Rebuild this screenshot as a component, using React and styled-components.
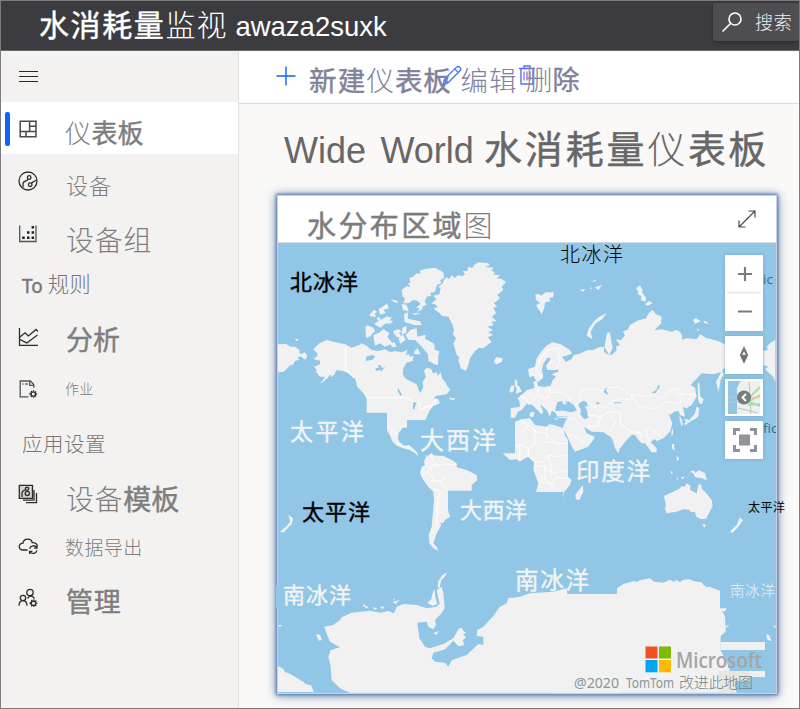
import React from "react";
import styled, { createGlobalStyle } from "styled-components";

const latinCjk = '"Liberation Sans", "Noto Sans CJK SC", sans-serif';

const GlobalStyle = createGlobalStyle`
  * { box-sizing: border-box; }
  body { margin: 0; font-family: ${latinCjk}; overflow: hidden; }
  svg { display: block; flex: none; }
`;

const Window = styled.div`
  display: grid;
  grid-template-rows: 50px 1fr;
  width: 800px;
  height: 709px;
  border: 1px solid #7b7b7d;
  background: #faf9f8;
  overflow: hidden;
`;
const Header = styled.header`
  display: flex;
  align-items: center;
  justify-content: space-between;
  background: #3c3b40;
  border-bottom: 1px solid #68686b;
  color: #fff;
`;
const Brand = styled.div`
  display: flex;
  align-items: center;
  height: 50px;
  padding-left: 38px;
`;
const Run = styled.span`
  font-family: ${(p) => p.$font || "inherit"};
  font-size: ${(p) => p.$size}px;
  font-weight: ${(p) => (p.$weight === 500 ? 400 : p.$weight)};
  -webkit-text-stroke: ${(p) => (p.$weight === 500 ? 0.45 : 0)}px currentColor;
  letter-spacing: ${(p) => p.$track || 0}px;
  line-height: 1.2;
  white-space: pre;
`;
const BrandLatin = styled.span`
  font-size: 27.5px;
  line-height: 32px;
  margin-left: 8px;
  padding-top: 2px;
`;
const Search = styled.div`
  display: flex;
  align-items: center;
  width: 86px;
  height: 38px;
  margin-bottom: 7px;
  padding-left: 8px;
  gap: 12px;
  border-radius: 2px;
  background: #4e4d52;
  color: #f0f0ec;
  box-shadow: 0 1px 3px #29292c;
  overflow: hidden;
  white-space: nowrap;
`;
const SearchText = styled.span`
  font-size: 18px;
  font-weight: 300;
  line-height: 24px;
  letter-spacing: 0.8px;
  padding-top: 2px;
`;
const Body = styled.div`
  display: grid;
  grid-template-columns: 238px 1fr;
  min-height: 0;
`;
const Sidebar = styled.nav`
  background: #f3f2f1;
  border-right: 1px solid #e1dfdd;
`;
const MenuBar = styled.div`
  display: flex;
  align-items: center;
  height: 51px;
  padding: 0 0 2px 18px;
`;
const NavRow = styled.div`
  display: grid;
  grid-template-columns: 4px 1px 20px 1fr;
  align-items: center;
  height: 52.2px;
  padding-left: 4px;
  column-gap: 4px;
  background: ${(p) => (p.$active ? "#fff" : "transparent")};
`;
const Marker = styled.i`
  grid-column: 1;
  height: 34px;
  width: 5px;
  border-radius: 2px;
  background: ${(p) => (p.$active ? "#0f62fe" : "transparent")};
`;
const IconCell = styled.span`
  grid-column: 3;
`;
const NavLabel = styled.span`
  grid-column: 4;
  display: flex;
  align-items: center;
  height: 40px;
  margin-top: ${(p) => p.$drop * 2 + 3}px;
  padding-left: ${(p) => p.$inset + 4}px;
  color: #7f7e7e;
`;
const SectionRow = styled.div`
  display: flex;
  align-items: center;
  height: 52.2px;
  padding: ${(p) => p.$drop * 2 + 3}px 0 0 21px;
  color: #777676;
`;
const Main = styled.main`
  display: grid;
  grid-template-rows: 53px 91px 1fr;
  min-width: 0;
`;
const Commands = styled.div`
  display: flex;
  align-items: flex-start;
  background: #fff;
  border-bottom: 1px solid #dddcdb;
  padding: 14px 0 0 36px;
  color: #7f829c;
`;
const CommandText = styled.span`
  display: flex;
  align-items: center;
  height: 32px;
  margin: 0 ${(p) => p.$after}px 0 ${(p) => p.$before}px;
`;
const Title = styled.h1`
  display: flex;
  align-items: center;
  margin: 0;
  padding: 2px 0 0 45px;
  font-weight: 400;
  color: #686767;
`;
const TitleLatin = styled.span`
  font-size: 36px;
  word-spacing: 4.5px;
  margin-right: 10px;
  padding-top: 1px;
  white-space: nowrap;
`;
const Card = styled.section`
  display: grid;
  grid-template-rows: 47px 450px;
  width: 500px;
  height: 499px;
  margin-left: 38px;
  border: 1px solid #cbd3df;
  background: #fff;
  box-shadow: 0 0 3px 1px #5378ad, 0 1px 10px 1px #7891b5;
`;
const CardHead = styled.div`
  display: flex;
  align-items: center;
  justify-content: space-between;
  border-bottom: 1px solid #d9dcdd;
  padding: 0 20px 0 29px;
  color: #7c7c7b;
`;
const CardTitle = styled.span`
  display: flex;
  align-items: center;
  padding-top: 16px;
`;
const MapArea = styled.div`
  position: relative;
  background: #91c6e6;
`;
const MapControls = styled.div`
  position: absolute;
  top: 12px;
  left: 447px;
  display: grid;
  gap: 5px;
`;
const ControlBox = styled.div`
  width: 38px;
  height: ${(p) => p.$height || 38}px;
  background: #fff;
  box-shadow: 0 0 3px #5687a180;
`;

const iconLine = { fill: "none", stroke: "#2d2c2b", strokeWidth: 1.3 };

const Icon = ({ children, size = 20 }) => (
  <svg width={size} height={size} viewBox="0 0 20 20" {...iconLine}>{children}</svg>
);
const gear = (x, y) => (
  <>
    <circle cx={x} cy={y} r="2.2" />
    <path strokeDasharray="1.2 1.1" strokeWidth="1.3" d={`M${x - 3.2} ${y}a3.2 3.2 0 1 0 6.4 0a3.2 3.2 0 1 0-6.4 0`} />
  </>
);
const icons = {
  dashboard: <Icon><path d="M2.2 2.2h15.8v15.6H2.2zM2.2 12.6H18M11.6 2.2v10.4M11.6 7.2H18M8 12.6v5.2" stroke="#4a4a4a" strokeWidth="1.5" /></Icon>,
  device: <Icon><circle cx="10" cy="10" r="9" /><circle cx="11.2" cy="6.5" r="1.8" /><circle cx="12.2" cy="13.7" r="1.8" /><path d="M10 8c-1 3-5.2 1.2-5 5v3.5M13.6 12.3c1.3-2 3-1.2 4.7-3.4" /></Icon>,
  group: <Icon><path d="M1.7 1.5v16H18v-16" stroke="#555" /><g fill="#222" stroke="none"><path d="M13.6 2h2.5v2.5h-2.5zM9 7.2h2.5v2.5H9zM13.6 7.2h2.5v2.5h-2.5zM4.2 12.5h2.5V15H4.2zM9 12.5h2.5V15H9zM13.6 12.5h2.5V15h-2.5z" /></g></Icon>,
  analytics: <Icon><path d="M1.5 1v17.3H20M2 10l5-4.2 3.4 3.1L18 2.5l2 2M2 12.5l6.8 3.4 10.7-8" /></Icon>,
  jobs: <Icon><path d="M10.5 17.8H2.2V2h10.2l3.4 3.5v3.2M11.7 2.3v4h4M4.3 5h1.2m1.8 0h2.5" stroke="#555" />{gear(15.3, 15)}</Icon>,
  templates: <Icon><path fill="#d5d4d3" d="M1.3 1.3h13.2v13H1.3z" /><circle cx="9" cy="4.7" r="1.6" /><circle cx="9.3" cy="9.4" r="2.1" /><path d="M7.2 5.5C6.4 7 4 6.5 4 9v4M16 6v10.2H5M18.5 9v9.7H8" /></Icon>,
  cloud: <Icon><path d="M9.5 14H5C0 14 0 7.2 5 7.2 5.5 2 13.4 1.7 14.2 6.7c2.8-.3 4.6 1 5.2 3.1M11.6 12.7a4 4 0 0 1 7.2-1.1M19 9.5v2.6h-2.9M19 14.4a4 4 0 0 1-7.2 1.2M11.6 18v-2.6h2.8" /></Icon>,
  admin: <Icon><circle cx="12" cy="4.5" r="3.2" /><circle cx="5" cy="10" r="2.7" /><path d="M1 17.8c0-7 8-7 8 0M9.5 10.6c1.4-3.3 5.6-3.2 7 0" />{gear(15.5, 15.2)}</Icon>,
};

const navigation = [
  { icon: "dashboard", active: true, drop: 5, inset: 19, runs: [["仪", 26, 300, 0.5], ["表板", 26, 500, 0]] },
  { icon: "device", drop: 5, inset: 20, runs: [["设备", 22, 300, 1]] },
  { icon: "group", drop: 6, inset: 20, runs: [["设备组", 28, 300, 0.8]] },
  { section: true, drop: 0, runs: [["To ", 19, 500, 0, "Noto Sans"], ["规则", 21.5, 300, 0]] },
  { icon: "analytics", drop: 3, inset: 20, runs: [["分析", 27, 500, 0]] },
  { icon: "jobs", drop: -1, inset: 19, runs: [["作业", 14, 300, 0.3]] },
  { section: true, drop: 3, runs: [["应用设置", 20.5, 300, 0.5]] },
  { icon: "templates", drop: 5, inset: 20, runs: [["设备", 28, 300, 0.6], ["模板", 28, 500, 0]] },
  { icon: "cloud", drop: 2, inset: 19, runs: [["数据导出", 19, 300, 0.4]] },
  { icon: "admin", drop: 4, inset: 20, runs: [["管理", 27, 500, 0.8]] },
];

const Runs = ({ items }) => items.map(([text, size, weight, track, font]) => (
  <Run key={text} $size={size} $weight={weight} $track={track} $font={font}>{text}</Run>
));

const mapLabels = [
  ["北冰洋", 290, 290, 68, 22, "#000", 500],
  ["北冰洋", 560, 262, 63, 20, "#000", 300],
  ["太平洋", 290, 440, 74, 23, "#f2f4f4", 400],
  ["大西洋", 420, 449, 76, 24, "#f2f4f4", 400],
  ["印度洋", 576, 480, 74, 23.5, "#f2f4f4", 400],
  ["太平洋", 302, 520, 68, 22, "#000", 500],
  ["大西洋", 460, 518, 67, 22, "#f2f4f4", 400],
  ["南冰洋", 283, 603, 68, 22, "#f2f4f4", 400],
  ["南冰洋", 515, 589, 74, 23.5, "#f2f4f4", 400],
  ["太平洋", 748, 512, 37, 12, "#000", 400],
  ["南冰洋", 730, 596, 45, 14.5, "#e8f2f7", 300],
];

const northAmerica = "M130 343L148 325 170 315 196 322 226 328 244 338 268 330 274 325 290 332 305 345 325 348 345 343 362 352 375 348 395 352 412 345 408 360 419 358 418 366 430 362 428 378 410 383 400 400 398 418 408 432 425 440 440 448 446 465 452 474 460 455 458 440 468 425 462 408 470 398 484 402 488 415 500 412 503 423 512 412 516 430 525 440 535 458 542 462 530 478 500 482 490 490 504 492 510 505 490 513 478 528 472 543 466 555H411V578H398L386 595 384 612 392 628 408 632 417 630 428 640 440 650 446 665 436 655 420 645 400 640 380 632 366 618 362 605 351 586V533H290V490L280 475 262 455 255 430 240 420 228 410 205 406 190 408 194 420 180 420 172 430 150 448 165 425 150 425 138 410 140 404 132 395 150 388 150 377 130 372 142 362 142 355Z";
const greenland = "M484 205L500 193 490 182 508 178 512 160 505 155 518 145 522 135 528 127 538 132 545 120 553 130 566 120 577 124 585 118 578 108 592 108 595 95 607 99 612 90 625 82 655 85 659 91 645 96 672 98 664 106 676 115 668 119 681 120 690 120 681 130 695 132 708 142 695 155 700 165 682 180 690 190 672 205 682 216 670 217 678 235 665 245 680 258 664 260 671 270 652 275 669 285 655 292 670 300 653 306 665 320 640 340 627 338 615 348 600 370 595 390 588 408 572 400 565 375 568 367 560 360 550 325 558 310 548 298 552 285 548 270 535 245 515 242 509 235 490 220 502 217 498 209Z";
const arctic = "M400 205L405 190 398 185 395 165 411 153 421 157 414 145 421 143 418 128 430 125 440 115 450 117 450 107 465 102 495 98 520 112 522 128 510 136 515 143 501 150 495 170 481 174 484 182 470 185 464 199 470 210 459 214 455 225 440 230 450 220 438 218 452 207 443 198 430 195 415 205Z M286 275L292 271 310 278 315 289 305 298 302 304 288 306Z M310 300L330 292 340 282 358 295 352 305 368 325 345 335 330 325 315 332Z M361 194l18 2 6 8-12-2z M338 215l13-10 6 15-17 5 8 9-18 5-4-17z M298 240l14-16 10 6-8 6 4 10-17-2z M320 249l7-4 6 10-9 2z M338 251l13-7 15 5-8 7 12 3-10 7-17-1-6-11 16-8-1 15-21 17-19-11z M395 207l14 2 8 20-18-4z M402 237l12-5-1 19 37 8 5 11-20 1-31-10z M425 235h28l-18 5z M370 288l15-5 10 6-8 6 8 10-14 2-11-14z M397 278l13-5-1 20-14 6z M385 310l14-11 8 15-16 12z M407 300l15-16 18-4 2 25 25-6-2 12 28 15 1 18 14 5-4 18-10 3 5 19-24-11-1-20-21-26-18-17-20-1z M433 348l10-8 8 18-18-1z M360 325l13-3 7 13-14 1z M286 300l12 5-7 5z M490 370l15-3-1 24-15-5z";
const eurasia = "M-28 520L0 515-2 498-8 490 5 480 20 466 44 458 40 440 52 436 53 453 74 456 91 452 98 435 108 425 95 418 113 410 110 405 76 410 68 430 55 441 45 433 42 423 28 427 24 402 45 395 50 370 65 348 82 330 98 322 122 328 150 345 156 356 138 362 126 365 138 381 155 372 161 360 180 356 190 350 205 345 217 346 240 335 252 337 252 350 262 358 275 360 290 346 288 335 300 330 287 313 302 316 315 302 309 289 323 284 330 270 352 257 378 250 388 232 398 225 408 238 425 245 423 266 403 286 425 283 455 290 468 285 480 290 487 302 486 314 500 310 530 312 541 298 560 310 575 313 600 320 616 330V398L606 405 611 418 602 434 596 470 588 440 604 411 580 418 545 415 512 450 525 458 530 485 515 510 500 520 488 516 492 530 495 545 480 540 476 528 463 530 450 540 445 535 457 565 450 590 430 610 410 618 404 612 392 621 410 640V652H395L375 625 365 625 355 615 345 600 335 600 320 615 300 640 295 655 285 640 279 618 272 605 262 600 252 592 215 590 192 575 200 595 225 605 220 615 205 635 165 650 158 640 140 600 128 580 135 560 145 545 112 543 105 532 95 527 90 545 80 525 60 508 70 530 65 538 52 525 36 509 20 507 5 525-6 530-15 548-28 548Z";
const africa = "M-15 5L5-2 30-5 45 15 80 20 88 13 100 14 130 25 135 45 144 60V170L155 180 150 195 132 216 130 238V216H48L55 190 40 150 42 125 25 110 12 116 0 125-10 118-30 120-52 100H-15Z";
const southAmerica = "M462 125L468 110 485 100 491 106 520 108 545 120 560 130 560 142 590 150 620 165 622 180 605 195V212H534V270L540 290 525 300 520 309 510 308 514 315 498 345 490 370 500 380 505 392 490 385 478 370 476 345 485 320 492 240 490 215 475 200 460 180 450 160 455 140 465 135Z";
const antarcticaWest = "M163 620L190 615 210 600 215 592 245 578 300 572 332 578 355 573 372 580 380 560 400 552 440 555 470 565 500 560 509 550 505 535 500 510 515 500 520 520 524 565 515 580 495 600 498 615 490 628 475 620 470 605 442 608 448 655 465 680 480 685 520 672 550 655 566 626 575 623 582 635 589 639 579 643 588 652 579 660 582 676 565 679 550 662 526 688 490 698 485 715 495 725 525 728 535 740 545 721 590 705 625 672 640 675V650L620 648 622 630 640 620 670 588 688 562 710 550 715 535 750 530 780 520 850 515 890 505 892 522H1050V818H240L210 805 185 780 182 740 175 710 182 690 210 682 180 665 168 637Z";
const antarcticaEast = "M140 522H262L272 530 282 522H291V505L310 492 342 483 350 486 358 481 390 475 402 485 430 488 450 479 461 485 470 480 480 487 490 479 510 478 520 484 545 487 550 494 560 502 568 500 600 512V565H620L615 574 607 574 615 590 617 635 602 648V666L602 690 625 738 632 760 650 818H100Z";

const GeoMap = () => (
  <svg width="498" height="450" viewBox="278 243 498 450" overflow="visible">
    <defs><clipPath id="mapBounds"><rect x="278" y="243" width="498" height="450" /></clipPath></defs>
    <g clipPath="url(#mapBounds)" fill="#f1f1f1">
      <g transform="translate(270 235) scale(.333333)">
        <path d="M24 328L48 327 62 335 75 335 88 345 90 358 104 352 112 363 106 374 92 364 82 368 88 374 75 378 68 390 58 392 48 404 40 410 24 412Z M75 310l12 4-8 4z" />
        <path d={northAmerica} /><path d={greenland} /><path d={arctic} />
        <path d="M672 376L680 366 698 370 696 380 680 388 674 385Z M718 468l5-15 10-3-2 18-8 5z M735 431l8 10-2 8 8 6 6 15-18 6 3-13-6-15z M537 486l8 4 10-1-3 7-12-3z M195 405l4 3-13 18-4-2zM465 660l5 0-1 4z" />
        <path fill="#91c6e6" d="M288 365l18-5 10 4-8 10-20 4z M316 400l11-1-3-8 7-2 5 10 10-3-10 10 2 5-8-6-12 3z M384 458l12 21-4 4-9-15z M430 502h10l-8 23-4-5z" />
        <path fill="none" stroke="#fff" strokeWidth="3" d="M226 330V408L239 412 252 430 M290 488H400L415 492 428 498 445 500 451 525 465 516 484 513 500 492 M351 570L370 588 382 598 M384 628L397 626" />
      </g>
      <g transform="translate(520 235) scale(.333333)">
        <path d={eurasia} />
        <path d="M730 348L744 344 740 335 750 325 766 314V440L759 425 745 412 735 402 745 395 730 390Z" />
        <path d="M46 178l12-1 5 5 15-10 24 0-3 15-12 2 4 9-16 5-2 15-8 20-8-14-9-13 12-7-12-9z M348 160l12-9 8 14-2 7 12 17-2 11-13-4 1-12-12-8 3-6z M375 208l12-10 11 7-15 7z M200 302l6-21 15-21 15-14 24-12-12 17-22 15-14 24 5 22z M253 337l8-43 9-2 3 21 5 25-10 22z M519 255l8-5 16 9-18 7z M551 256l15 9-7 1-8-4z M530 281l8 2-3 5z M180 165l15-3-5 8z M225 157l20-6-10 14z M210 160l5-3 2 6z M213 140l15-6v5z M533 445h5l3 40 10 8-5 14-8-2-4-14zM530 515l8 3-3 26-10 9-8 3-22 15-3-5 18-13 15-18z M478 540l9 18-3 14-5-18z M454 590l6-12-1 18-4 9z M32 532l12-1-4 16-13-4zM98 550l15 1-2 4z" />
        <g fill="#91c6e6">
          <path d="M66 406l4-20 12-17 10-1-4 11-10 14 4 12 26 1 4-5 4 9-26 3-14 17-5 1z" />
          <path d="M105 528L112 501 125 498 132 509 141 506 134 499 155 502 171 526 155 532 129 527Z M178 505l12-8 11 5 2 13-9-2 7 14 4 22-12 4-12-15 2-14-8-13z" />
          <path d="M251 471l2-10 12-7-7 12 8 13-8-2zM282 502l22 0v3h-22zM226 502l14 1-7 10zM395 473l14-8 6-16 5 5-14 21z" />
        </g>
        <path fill="none" stroke="#fff" strokeWidth="2.5" d="M65 430L48 397 75 351 96 342 114 338 118 378 112 401 M20 466L40 490 55 482 54 458 M55 481L81 492 90 473 84 456 M90 474L120 470 149 488 155 508 M0 482L20 492 28 510 M176 491L184 465 216 460 250 467 258 458 300 456 319 475 335 478 336 495 294 490 276 502 255 519 231 508 228 519 202 501 M336 478L376 484 400 481 425 491 454 463 490 488 476 508 440 499 407 522 354 513 335 478 M454 463L476 460 486 478 527 479 M202 539L242 545 268 530 302 533 301 565 330 589 361 593 365 609 M242 545L232 576 202 574 M268 530L285 562 269 590 M110 546L160 550 187 575 M140 600L160 603 198 623 M376 577L386 618 M386 577L420 600" />
      </g>
      <g transform="translate(520 420) scale(.333333)">
        <path d={africa} />
        <path fill="none" stroke="#fff" strokeWidth="2.5" d="M0 0L45 30V72L25 85 0 72-15 80 M45 34L80 43 110 70 144 70 M80 20L80 65 110 70 M25 85V109L42 125 70 125 84 106 110 110 144 104 M42 137L75 140 95 160 141 151 M56 185L96 190V216 M75 140V180L96 190 110 172 144 176 M84 106L93 140 95 160 M0 72L-3 119 M25 20L0 38" />
        <path d="M166 225L188 195 190 215 178 240 168 238Z M432 228L460 215 480 205 485 198 495 200 499 190 512 198 510 210 530 220 535 195 542 192 546 208 555 215 575 240 578 258 564 285 558 296 545 298 530 292 524 275 512 276 508 269 490 268 470 275 440 280 434 265 438 257Z M546 312l13 2-6 9z M510 155l12-4 4 8 10-8 19 8 6 22-17-7-18-2-7-13z M629 335L650 315 660 292 669 301 655 320 638 338Z M450 150l8 8-4 5z M470 175l5-2-4 10z M482 172l13-2-8 8z M455 73l7-2 2 20-7-4z M470 105l8 13-7 5z M610 620l20-6-14 11z M738 643l9 2 8 18-12-3z M760 620l6-5v10z M483 5l6 5-4 10z M493-3l12 1-6 10z" />
        <path d={antarcticaEast} />
        <path d="M602 666H735V690H602zM645 753H735V771H645z" fill="#f0f0ef" />
        <path d="M597 753H687V783H645V818H597z" fill="#e8e6e1" />
      </g>
      <g transform="translate(270 420) scale(.333333)">
        <path d={southAmerica} />
        <path fill="none" stroke="#fff" strokeWidth="2.5" d="M485 101L488 123 506 136 527 133 560 134 M465 135L483 150 489 135 506 136 M454 168L473 155 485 166 489 184 512 182 525 205 534 204 M492 205L511 216 503 238 500 320 M512 182L530 172" />
        <path d={antarcticaWest} />
        <path d="M24 738L40 746 45 756 60 762 100 785 107 792 123 796 132 816H24Z M138 643l12 1 6 16-10 2z M503 503l2-20 12-17 15-10-6 12-12 12-5 23z M472 548l12-10 4-20 5-11 4 28 5 17-14 6z M30 335L50 318 61 306 55 285 65 292 70 295 65 312 40 338Z M280 553l14 8-2 5-13-8zM305 562l16 2-5 6zM330 560h14l-7 8zM366 546l25-7-13 10 4 5zM370 535l5 3-5 3z M24 615h13l-8 6z" />
        <path fill="#91c6e6" d="M454 612l12 3 1 13-14-4z" /><path d="M490 640l17-8-8 13z" />
      </g>
    </g>
    <rect x="276" y="585" width="3" height="23" fill="#91c6e6" />
    {mapLabels.map(([text, x, y, length, size, color, weight], index) => (
      <text key={index} x={x} y={y} textLength={length} fontSize={size} fill={color} fontWeight={weight === 500 ? 400 : weight} stroke={size > 20 ? color : "none"} strokeWidth="0.4" fontFamily="Noto Sans CJK SC, sans-serif">{text}</text>
    ))}
    <text x="763" y="284" fontFamily="Open Sans" fontSize="13.5" fill="#3b6b8d">ic</text>
    <text x="763" y="433" fontFamily="Open Sans" fontSize="13.5" fill="#3b6b8d" clipPath="url(#mapBounds)">fic</text>
    <path fill="#f25022" d="M645.5 646.5h12v12h-12z" /><path fill="#7fba00" d="M659 646.5h12v12h-12z" />
    <path fill="#00a4ef" d="M645.5 660h12v12.3h-12z" /><path fill="#ffb900" d="M659 660h12v12.3h-12z" />
    <text x="676" y="667.5" textLength="86" lengthAdjust="spacingAndGlyphs" fontFamily="Open Sans" fontWeight="600" fontSize="21" fill="#a5a5a5">Microsoft</text>
    <text x="574" y="688" textLength="45" lengthAdjust="spacingAndGlyphs" fontFamily="Noto Sans, sans-serif" fontSize="13.5" fill="#8b9598">@2020</text>
    <text x="626" y="688" textLength="48" lengthAdjust="spacingAndGlyphs" fontFamily="Noto Sans, sans-serif" fontSize="13.5" fill="#8b9598">TomTom</text>
    <text x="679" y="688" textLength="74" fontFamily="Noto Sans CJK SC" fontWeight="300" fontSize="15" fill="#748389">改进此地图</text>
  </svg>
);

export default function App() {
  return (
    <>
      <GlobalStyle />
      <Window>
        <Header>
          <Brand>
            <Runs items={[["水消耗量", 30, 500, 1.6], ["监视", 30, 300, 1]]} />
            <BrandLatin>awaza2suxk</BrandLatin>
          </Brand>
          <Search>
            <svg width="22" height="22" viewBox="0 0 22 22" fill="none" stroke="#fff" strokeWidth="1.6"><circle cx="14" cy="8" r="6" /><path d="M9.8 12.2L1.5 20.5" /></svg>
            <SearchText>搜索</SearchText>
          </Search>
        </Header>
        <Body>
          <Sidebar>
            <MenuBar><svg width="20" height="12" viewBox="0 0 20 12" stroke="#292827" strokeWidth="1"><path d="M0 1.5h19M0 6.5h19M0 11.5h19" /></svg></MenuBar>
            {navigation.map((item) => item.section ? (
              <SectionRow key={item.runs[0][0]} $drop={item.drop}><Runs items={item.runs} /></SectionRow>
            ) : (
              <NavRow key={item.icon} $active={item.active}>
                <Marker $active={item.active} />
                <IconCell>{icons[item.icon]}</IconCell>
                <NavLabel $drop={item.drop} $inset={item.inset}><Runs items={item.runs} /></NavLabel>
              </NavRow>
            ))}
          </Sidebar>
          <Main>
            <Commands>
              <svg width="22" height="22" viewBox="0 0 22 22" stroke="#0b62ff" strokeWidth="1.4"><path d="M1.5 11h19M11 1.5v19" /></svg>
              <CommandText $before={12} $after={-11}><Runs items={[["新建", 27.5, 500, 1.2], ["仪", 27.5, 300, 1], ["表板", 27.5, 500, 0.8]]} /></CommandText>
              <svg width="22" height="22" viewBox="0 0 22 22" fill="none" stroke="#557aff" strokeWidth="1.4"><path d="M2 19.5l1.4-5.2L15.6 2.1c2.3-1.8 5.2 1.2 3.6 3.5L7 17.8zM3.4 14.3L7 17.8M13.8 3.9l3.6 3.6" /></svg>
              <CommandText $before={-2} $after={1}><Runs items={[["编辑", 27.5, 300, 1]]} /></CommandText>
              <svg width="16" height="22" viewBox="0 0 16 22" fill="none" stroke="#536fff" strokeWidth="1.4"><path d="M0 3.5h16M5 3.5V1h6v2.5M2 3.5V19h12V3.5" /><path stroke="#9a77ff" d="M5 6.5v9M8 6.5v9M11 6.5v9" /></svg>
              <CommandText $before={-9} $after={0}><Runs items={[["删", 27, 300, 0], ["除", 27, 500, 0]]} /></CommandText>
            </Commands>
            <Title>
              <TitleLatin>Wide World</TitleLatin>
              <Runs items={[["水消耗量", 38, 500, 2.9], ["仪", 38, 300, 2.6], ["表板", 38, 500, 2.2]]} />
            </Title>
            <Card>
              <CardHead>
                <CardTitle><Runs items={[["水分布", 29, 500, 2.4], ["区域", 29, 500, 2.2], ["图", 29, 300, 0]]} /></CardTitle>
                <svg width="18" height="18" viewBox="0 0 18 18" fill="none" stroke="#4a4a4a" strokeWidth="1.2"><path d="M1 17L17 1M10.5 1H17v6.5M1 10.5V17h6.5" /></svg>
              </CardHead>
              <MapArea>
                <GeoMap />
                <MapControls>
                  <ControlBox $height={76}>
                    <svg width="38" height="76" fill="none" stroke="#777b80" strokeWidth="2.2"><path d="M13 19h14M20 12v14M13 56.5h14" /><path d="M2 37.5h34" stroke="#eee" /></svg>
                  </ControlBox>
                  <ControlBox>
                    <svg width="38" height="37"><path d="M19 10l4.2 9-4.2 9-4.2-9z" fill="#72767b" /><path d="M19 15.5l2 3.3h-4z" fill="#fff" /></svg>
                  </ControlBox>
                  <ControlBox $height={37}>
                    <svg width="38" height="37">
                      <path fill="#91c6e6" d="M3 2h13l-4 7v26H3z" /><path fill="#efefef" d="M16 2h19v33H12V9z" />
                      <path fill="none" stroke="#c3c5c5" strokeWidth="1" d="M3 18h12M3 23h15M24 3l2 32M13 29l20 5" />
                      <path fill="none" stroke="#a4dfad" strokeWidth="2" d="M25 18l10-10M25 22l10-6M24 23l11 4M23 26l12-1" /><path fill="none" stroke="#edcab1" strokeWidth="2" d="M23 20l12-2" />
                      <circle cx="19" cy="18.5" r="7" fill="#787b80" /><path fill="none" stroke="#fff" strokeWidth="2" d="M21 15l-3.5 3.5L21 22" />
                    </svg>
                  </ControlBox>
                  <ControlBox>
                    <svg width="38" height="37" fill="none" stroke="#909398" strokeWidth="3"><path d="M9.5 14V8.5H15M25 8.5h5.5V14M30.5 24v5.5H25M15 29.5H9.5V24" /><path fill="#909398" stroke="none" d="M14 13.5h11v11H14z" /></svg>
                  </ControlBox>
                </MapControls>
              </MapArea>
            </Card>
          </Main>
        </Body>
      </Window>
    </>
  );
}
